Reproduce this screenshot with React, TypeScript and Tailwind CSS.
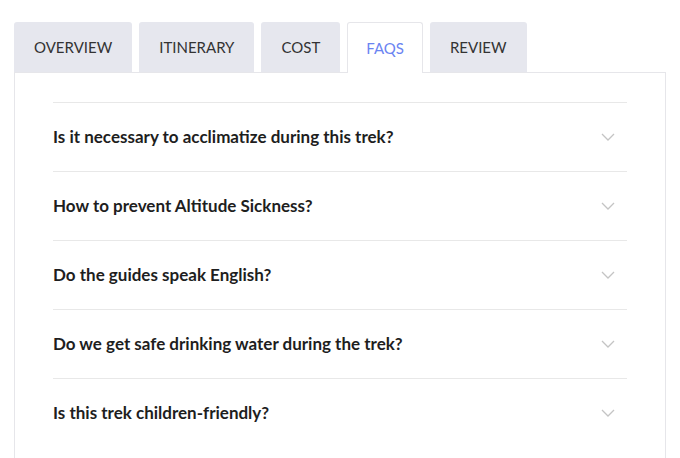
import React from "react";

const tabs = ["OVERVIEW", "ITINERARY", "COST", "FAQS", "REVIEW"];
const faqs = [
  "Is it necessary to acclimatize during this trek?",
  "How to prevent Altitude Sickness?",
  "Do the guides speak English?",
  "Do we get safe drinking water during the trek?",
  "Is this trek children-friendly?",
];

function Chevron() {
  return (
    <svg width="14" height="8" viewBox="0 0 14 8" fill="none" className="shrink-0">
      <path d="M1 1l6 6 6-6" stroke="#c4c4c4" strokeWidth="1.3" />
    </svg>
  );
}

export default function App() {
  return (
    <div className="w-[680px] h-[458px] overflow-hidden bg-white pt-[22px] pl-[14px]" style={{ fontFamily: "Lato, 'Open Sans', sans-serif" }}>
      <div className="w-[652px]">
        <div className="flex gap-[7px] relative z-10">
          {tabs.map((t) => {
            const active = t === "FAQS";
            return (
              <div
                key={t}
                className={
                  active
                    ? "h-[51px] -mb-px px-[18px] flex items-center rounded-t-[3px] bg-white border border-b-0 border-[#e6e6ea] text-[15px] text-[#6a84f2]"
                    : "h-[50px] px-[20px] flex items-center rounded-t-[3px] bg-[#e6e7ee] text-[15px] text-[#333333]"
                }
              >
                {t}
              </div>
            );
          })}
        </div>
        <div className="border border-[#e6e6ea] h-[400px] px-[38px] pt-[29px]">
          {faqs.map((q) => (
            <div key={q} className="h-[69px] border-t border-[#e8e8e8] flex items-center justify-between pr-[12px]">
              <span className="text-[17px] font-bold text-[#1e1e1e]">{q}</span>
              <Chevron />
            </div>
          ))}
        </div>
      </div>
    </div>
  );
}
